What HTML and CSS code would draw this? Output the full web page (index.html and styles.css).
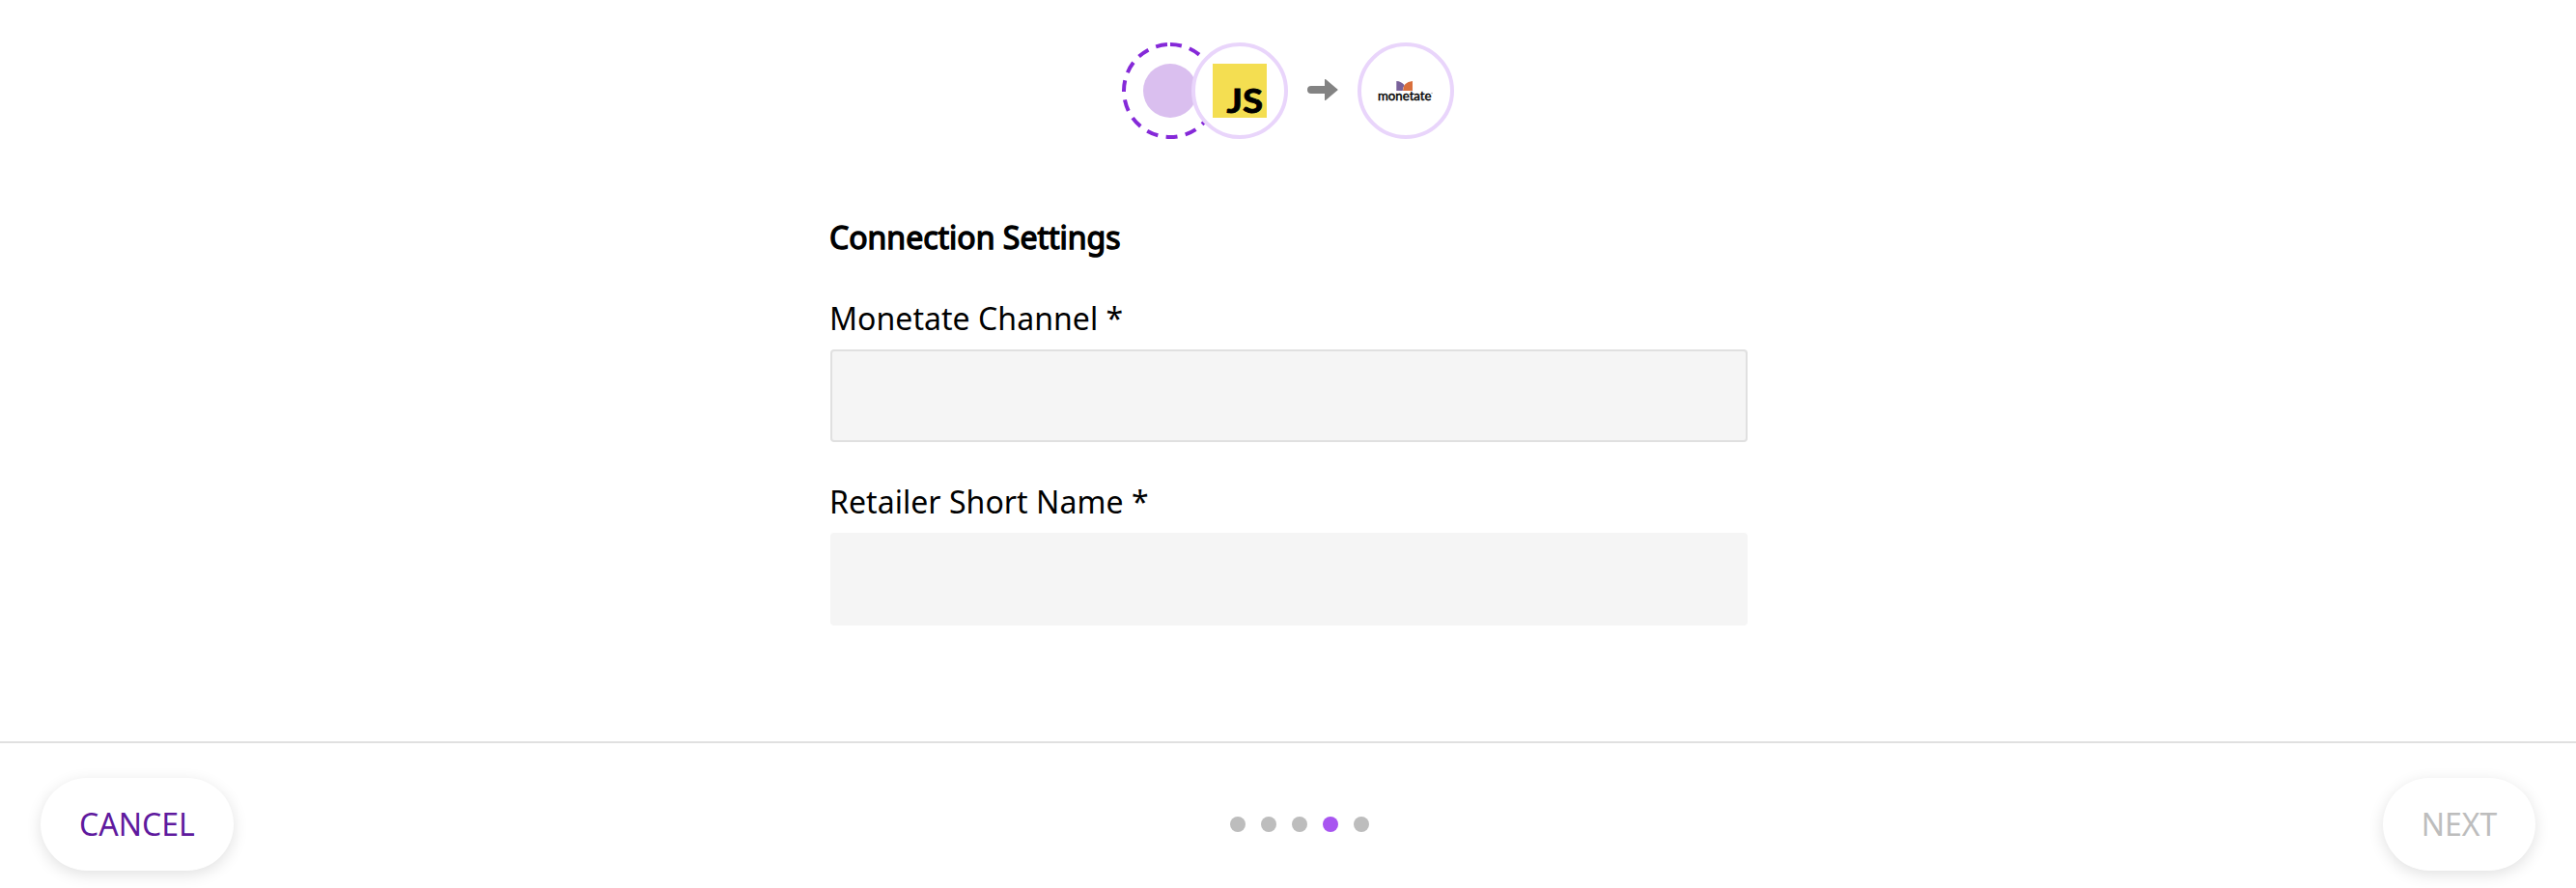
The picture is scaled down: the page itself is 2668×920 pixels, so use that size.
FILE: index.html
```html
<!DOCTYPE html>
<html lang="en">
<head>
<meta charset="utf-8">
<title>Connection Settings</title>
<link rel="stylesheet" href="styles.css">
</head>
<body>
<div class="page">
  <main class="content">
    <div class="flow">
      <svg class="node node-source" viewBox="0 0 100 100" aria-hidden="true">
        <circle class="node-dashes" cx="50" cy="50" r="48" transform="rotate(-90 50 50)"/>
        <circle class="node-core" cx="50" cy="50" r="28"/>
      </svg>
      <svg class="node node-js" viewBox="0 0 100 100" role="img" aria-label="JavaScript">
        <circle class="node-ring" cx="50" cy="50" r="48"/>
        <rect class="js-square" x="22" y="22" width="56" height="56"/>
        <text class="js-text" x="36.5" y="73" textLength="37.500" lengthAdjust="spacingAndGlyphs">JS</text>
      </svg>
      <svg class="arrow" viewBox="0 0 32 24" aria-hidden="true">
        <path d="M18 8H4a4 4 0 0 0 0 8h14v6.2q0 1.400 1.200.500L31.300 12.600q.8-.6 0-1.200L19.200 1.300Q18 .4 18 1.800z"/>
      </svg>
      <svg class="node" viewBox="0 0 100 100" role="img" aria-label="monetate">
        <circle class="node-ring" cx="50" cy="50" r="48"/>
        <path class="mark-left" d="M40.300 40q5 .3 8.400 4.200Q46.800 46.500 46.800 50h-6.500z"/>
        <path class="mark-right" d="M57 40v10H47q0-9 10-10z"/>
        <text class="brand-text" x="21" y="60" textLength="55.500" lengthAdjust="spacingAndGlyphs">monetate</text>
        <circle class="brand-tm" cx="77" cy="52.500" r=".8"/>
      </svg>
    </div>
    <form class="settings">
      <h1 class="title">Connection Settings</h1>
      <label class="label" for="channel">Monetate Channel *</label>
      <input class="field field-active" id="channel" type="text">
      <label class="label" for="retailer">Retailer Short Name *</label>
      <input class="field" id="retailer" type="text">
    </form>
  </main>
  <footer class="footer">
    <button class="button cancel" type="button">CANCEL</button>
    <div class="steps">
      <span class="step"></span>
      <span class="step"></span>
      <span class="step"></span>
      <span class="step step-current"></span>
      <span class="step"></span>
    </div>
    <button class="button next" type="button" disabled>NEXT</button>
  </footer>
</div>
</body>
</html>
```
FILE: styles.css
```css
* {
  box-sizing: border-box;
}

body {
  margin: 0;
  background: #fff;
  color: #000;
  font-family: "Noto Sans", sans-serif;
}

.page {
  display: flex;
  flex-direction: column;
  height: 920px;
}

.content {
  flex: 1;
  padding-top: 44px;
}

.flow {
  display: flex;
  align-items: center;
  justify-content: center;
}

.node {
  display: block;
  width: 100px;
  height: 100px;
}

.node-js {
  position: relative;
  margin-left: -28px;
}

.node-ring {
  fill: #fff;
  stroke: #e9d5fb;
  stroke-width: 4;
}

.node-dashes {
  fill: none;
  stroke: #8529d8;
  stroke-width: 4;
  stroke-dasharray: 12 8.43;
}

.node-core {
  fill: #dabfef;
}

.js-square {
  fill: #f4de51;
}

.js-text {
  font: 700 35px Lato, sans-serif;
  stroke: #000;
  stroke-width: 0.9px;
}

.arrow {
  width: 32px;
  height: 24px;
  margin: 0 20px 3px;
  fill: #838383;
}

.mark-left {
  fill: #79619a;
}

.mark-right {
  fill: #d96f3c;
}

.brand-text {
  font: 400 12.5px Lato, sans-serif;
  stroke: #000;
  stroke-width: 0.4px;
}

.brand-tm {
  fill: #aaa;
}

.settings {
  display: flex;
  flex-direction: column;
  width: 952px;
  margin: 80px auto 0;
  padding-left: 2px;
}

.title {
  margin: 0 0 40px -1px;
  font-size: 32px;
  font-weight: 400;
  line-height: 44px;
  -webkit-text-stroke: 1.4px #000;
}

.label {
  margin: 0 0 10px -1px;
  font-size: 32px;
  line-height: 44px;
  letter-spacing: 0.05px;
}

.field {
  height: 96px;
  margin: 0 0 40px;
  padding: 0 24px;
  border: 2px solid #f5f5f5;
  border-radius: 4px;
  background: #f5f5f5;
  font: inherit;
  font-size: 32px;
}

.field-active {
  border-color: #e0e0e0;
}

.footer {
  display: flex;
  align-items: center;
  justify-content: space-between;
  height: 152px;
  padding: 18px 42px 0;
  border-top: 2px solid #e0e0e0;
}

.button {
  height: 96px;
  padding: 0;
  border: 0;
  border-radius: 48px;
  background: #fff;
  box-shadow: 0 4px 16px rgba(0, 0, 0, 0.12);
  font: 400 32px/44px "Noto Sans", sans-serif;
}

.cancel {
  width: 200px;
  color: #5f1a9e;
}

.next {
  width: 158px;
  color: #bdbdbd;
}

.steps {
  display: flex;
  gap: 16px;
  margin-right: 18px;
}

.step {
  width: 16px;
  height: 16px;
  border-radius: 50%;
  background: #bdbdbd;
}

.step-current {
  background: #a855f0;
}
```
